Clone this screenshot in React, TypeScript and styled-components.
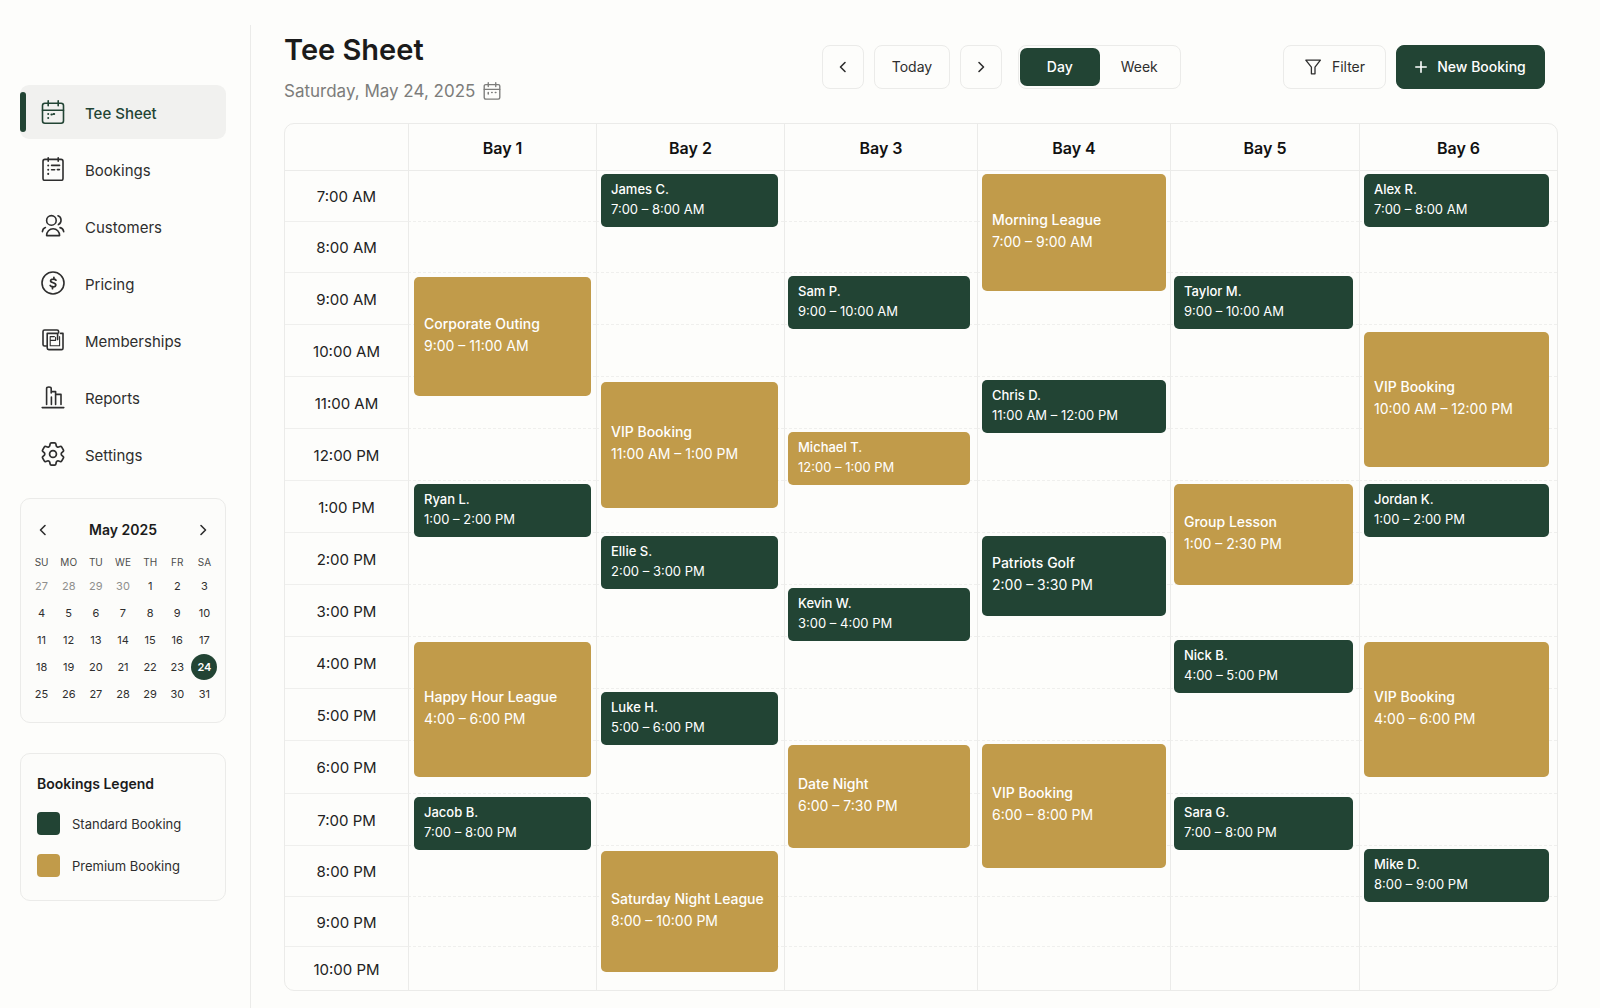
import React, { useState } from 'react';
import styled, { createGlobalStyle, css } from 'styled-components';

const color = {
  page: '#fdfdfb',
  panel: '#fcfcfa',
  line: '#ebebe9',
  lineSoft: '#efefed',
  ink: '#1b1b1b',
  text: '#2e2e2e',
  muted: '#7c7c7a',
  faint: '#8f8f8d',
  active: '#f1f1ef',
  green: '#224434',
  gold: '#c19b4a',
};

const GlobalStyle = createGlobalStyle`
  *, *::before, *::after { box-sizing: border-box; }
  body {
    margin: 0;
    background: ${color.page};
    color: ${color.text};
    font-family: Inter, "Liberation Sans", sans-serif;
    font-size: 15px;
    line-height: 20px;
  }
  button { font: inherit; color: inherit; padding: 0; cursor: pointer; }
  table { border-collapse: separate; border-spacing: 0; }
`;

const Shell = styled.div`
  display: grid;
  grid-template-columns: 251px minmax(0, 1fr);
  min-height: 100vh;
`;

const Sidebar = styled.aside`
  margin-top: 25px;
  padding: 60px 24px 24px 20px;
  border-right: 1px solid ${color.line};
`;

const NavList = styled.nav`
  display: flex;
  flex-direction: column;
  gap: 3px;
`;

const NavLink = styled.a<{ $active?: boolean }>`
  position: relative;
  display: flex;
  align-items: center;
  gap: 20px;
  height: 54px;
  padding-left: 21px;
  border-radius: 9px;
  color: ${color.text};
  text-decoration: none;
  ${(p) =>
    p.$active &&
    css`
      background: ${color.active};
      color: ${color.green};
      font-weight: 500;
      &::before {
        content: '';
        position: absolute;
        left: 0;
        top: 7px;
        bottom: 7px;
        width: 6px;
        border-radius: 3px;
        background: ${color.green};
      }
    `}
`;

const NavText = styled.span`
  padding-top: 4px;
`;

const Panel = styled.section`
  border: 1px solid ${color.line};
  border-radius: 10px;
  background: ${color.panel};
`;

const MiniCalendar = styled(Panel)`
  margin-top: 17px;
  padding: 15px 7px;
`;

const MonthBar = styled.div`
  display: flex;
  align-items: center;
  justify-content: space-between;
  height: 32px;
  margin-bottom: 6px;
  padding: 0 7px;
`;

const MonthName = styled.h2`
  margin: 0;
  font-size: 14px;
  font-weight: 600;
  color: ${color.ink};
`;

const IconButton = styled.button`
  display: grid;
  place-items: center;
  width: 16px;
  height: 16px;
  border: 0;
  background: none;
`;

const MonthTable = styled.table`
  width: 100%;
  table-layout: fixed;
  th {
    height: 20px;
    padding: 0;
    font-size: 10px;
    font-weight: 400;
    color: #4c4c4a;
  }
  td {
    height: 27px;
    padding: 0;
  }
`;

const DayButton = styled.button<{ $outside?: boolean; $selected?: boolean }>`
  display: block;
  width: 26px;
  height: 26px;
  margin: 0 auto;
  border: 0;
  border-radius: 50%;
  background: ${(p) => (p.$selected ? color.green : 'none')};
  color: ${(p) => (p.$selected ? '#fff' : p.$outside ? color.faint : color.text)};
  font-size: 11px;
  font-weight: ${(p) => (p.$selected ? 600 : 400)};
`;

const Legend = styled(Panel)`
  margin-top: 30px;
  padding: 20px 16px 23px;
`;

const LegendTitle = styled.h2`
  margin: 0 0 18px;
  font-size: 14px;
  font-weight: 600;
  color: ${color.ink};
`;

const LegendList = styled.ul`
  display: grid;
  gap: 19px;
  margin: 0;
  padding: 0;
  list-style: none;
`;

const LegendItem = styled.li`
  display: flex;
  align-items: center;
  gap: 12px;
  height: 23px;
  font-size: 13px;
`;

const Swatch = styled.span<{ $fill: string }>`
  width: 23px;
  height: 23px;
  border-radius: 4px;
  background: ${(p) => p.$fill};
`;

const Main = styled.main`
  min-width: 0;
  padding: 30px 42px 17px 33px;
`;

const Header = styled.header`
  display: flex;
  align-items: flex-start;
  justify-content: space-between;
  padding-right: 13px;
  margin-bottom: 20px;
`;

const Title = styled.h1`
  margin: 0;
  font-size: 29px;
  line-height: 40px;
  font-weight: 600;
  color: ${color.ink};
`;

const DateLine = styled.p`
  display: flex;
  align-items: center;
  gap: 8px;
  margin: 9px 0 0;
  font-size: 17px;
  line-height: 24px;
  color: ${color.muted};
`;

const Toolbar = styled.div`
  display: flex;
  gap: 102px;
  padding-top: 15px;
`;

const ToolGroup = styled.div`
  display: flex;
  gap: 10px;
`;

const Button = styled.button<{ $width: number; $primary?: boolean }>`
  display: flex;
  align-items: center;
  justify-content: center;
  gap: 10px;
  width: ${(p) => p.$width}px;
  height: 44px;
  border: 1px solid ${(p) => (p.$primary ? color.green : color.line)};
  border-radius: 8px;
  background: ${(p) => (p.$primary ? color.green : 'transparent')};
  color: ${(p) => (p.$primary ? '#fff' : color.text)};
  font-size: 14px;
  font-weight: ${(p) => (p.$primary ? 500 : 400)};
`;

const Segmented = styled.div`
  display: flex;
  width: 163px;
  height: 44px;
  margin-left: 6px;
  padding: 2px 1px;
  border: 1px solid ${color.line};
  border-radius: 8px;
`;

const Segment = styled.button<{ $on: boolean }>`
  flex: 1;
  border: 0;
  border-radius: 7px;
  background: ${(p) => (p.$on ? color.green : 'none')};
  color: ${(p) => (p.$on ? '#fff' : color.text)};
  font-size: 14px;
  font-weight: ${(p) => (p.$on ? 500 : 400)};
`;

const SheetFrame = styled.div`
  border: 1px solid ${color.line};
  border-radius: 10px;
`;

const Sheet = styled.table`
  width: 100%;
  table-layout: fixed;
`;

const SheetCol = styled.col<{ $width: number }>`
  width: ${(p) => p.$width}px;
`;

const BayHead = styled.th`
  height: 47px;
  padding: 2px 0 0;
  border-bottom: 1px solid ${color.line};
  font-size: 16px;
  font-weight: 600;
  color: #111;
  & + & { border-left: 1px solid ${color.line}; }
`;

const HourRow = styled.tr<{ $height: number }>`
  height: ${(p) => p.$height}px;
  &:last-child > * { border-bottom: 0; }
`;

const HourLabel = styled.th`
  padding: 2px 0 0;
  border-bottom: 1px solid ${color.lineSoft};
  font-weight: 400;
  color: #222;
`;

const Slot = styled.td`
  position: relative;
  padding: 0;
  border-left: 1px solid ${color.line};
  border-bottom: 1px dashed ${color.lineSoft};
`;

const Booking = styled.button<{
  $premium?: boolean;
  $roomy: boolean;
  $height: number;
  $lead: number;
  $inset: [number, number];
}>`
  position: absolute;
  z-index: 1;
  top: ${(p) => p.$lead}px;
  left: ${(p) => p.$inset[0]}px;
  right: ${(p) => p.$inset[1]}px;
  height: ${(p) => p.$height}px;
  display: flex;
  flex-direction: column;
  justify-content: center;
  padding: 0 10px 4px;
  border: 0;
  border-radius: 5px;
  background: ${(p) => (p.$premium ? color.gold : color.green)};
  color: #fff;
  font-size: ${(p) => (p.$roomy ? 14 : 13)}px;
  line-height: ${(p) => (p.$roomy ? 22 : 20)}px;
  text-align: left;
  white-space: nowrap;
`;

const BookingName = styled.span`
  font-weight: 500;
`;

type IconProps = { size?: number; children: React.ReactNode; box?: string; weight?: number };
const Icon = ({ size = 24, children, box = '0 0 24 24', weight = 1.6 }: IconProps) => (
  <svg width={size} height={size} viewBox={box} fill="none" stroke="currentColor" strokeWidth={weight}
    strokeLinecap="round" strokeLinejoin="round" aria-hidden="true">
    {children}
  </svg>
);

const TeeSheetIcon = () => (
  <Icon>
    <rect x="1.5" y="3.2" width="21" height="20" rx="2.4" />
    <path d="M1.5 10.2h21M7.2.8v5M17.2.8v5" />
    <path d="M7.2 14v.1M7.2 18v.1M10.4 14.4h.4M12.6 14h.6" strokeWidth="2" />
  </Icon>
);
const BookingsIcon = () => (
  <Icon>
    <rect x="2" y="2.4" width="20" height="21" rx="2" />
    <path d="M7.2.8v3.4M17.2.8v3.4M10.6 8.4h8M10.6 12.8h3M16.4 12.6h2" />
    <path d="M7.2 8.4v.1M7.2 12.7v.1M7.2 16.8v.1" strokeWidth="2" />
  </Icon>
);
const CustomersIcon = () => (
  <Icon>
    <circle cx="10.4" cy="6.4" r="4.8" />
    <path d="M17 1.8c4 1 4 7.400.4 8.800" />
    <path d="M5.600 21.600c0-4 2.800-6.800 6.500-6.800s6.500 2.800 6.500 6.800zM1.400 17.600c.3-2.200 1.300-3.500 3-4M19 13.600c2.100.4 3.300 1.800 3.700 4" />
  </Icon>
);
const PricingIcon = () => (
  <Icon>
    <circle cx="12" cy="12" r="11" />
    <path d="M15 9.200c-.8-1.300-5.200-1.700-5.400.6-.2 2.500 5.300 1.500 5.200 4.200-.1 2.400-4.500 2.200-5.600.5M12.900 6.300v2M11.500 15.700v2" strokeWidth="1.700" />
  </Icon>
);
const MembershipsIcon = () => (
  <Icon>
    <path d="M5.400 18H3.600a1.600 1.600 0 0 1-1.600-1.600V3.600A1.600 1.600 0 0 1 3.600 2H16a1.600 1.600 0 0 1 1.600 1.600V5" />
    <path d="M19.600 5.400H22v14.800a1.400 1.400 0 0 1-1.400 1.400H7.800a1.600 1.600 0 0 1-1.600-1.600V5.400h10.400v6.200" />
    <path d="M9.200 17.800V8.600h4.200M9.400 12.400h5.200v-3M18.600 8.600v9.200H9.400" strokeWidth="1.100" />
  </Icon>
);
const ReportsIcon = () => (
  <Icon>
    <path d="M1.200 22.600h21.600" />
    <path d="M5.600 19.400V3.400c0-1.800 4.600-1.800 4.600 0V8M10.200 6.600h4.400V19.400M14.600 9.400h5.400V19.400M10.400 12v7.400" strokeWidth="1.600" />
  </Icon>
);
const SettingsIcon = () => (
  <Icon box="2.200 2.200 19.600 19.600" weight={1.400}>
    <path d="M9.594 3.940c.09-.542.56-.94 1.110-.94h2.593c.55 0 1.020.398 1.110.94l.213 1.281c.063.374.313.686.645.870.074.040.147.083.220.127.325.196.720.257 1.075.124l1.217-.456a1.125 1.125 0 0 1 1.370.490l1.296 2.247a1.125 1.125 0 0 1-.260 1.431l-1.003.827c-.293.241-.438.613-.430.992a7.723 7.723 0 0 1 0 .255c-.008.378.137.750.430.991l1.004.827c.424.350.534.955.260 1.430l-1.298 2.247a1.125 1.125 0 0 1-1.369.491l-1.217-.456c-.355-.133-.750-.072-1.076.124a6.470 6.470 0 0 1-.220.128c-.331.183-.581.495-.644.869l-.213 1.281c-.090.543-.560.940-1.110.940h-2.594c-.550 0-1.019-.398-1.110-.940l-.213-1.281c-.062-.374-.312-.686-.644-.870a6.520 6.520 0 0 1-.220-.127c-.325-.196-.720-.257-1.076-.124l-1.217.456a1.125 1.125 0 0 1-1.369-.490l-1.297-2.247a1.125 1.125 0 0 1 .260-1.431l1.004-.827c.292-.240.437-.613.430-.991a6.932 6.932 0 0 1 0-.255c.007-.380-.138-.751-.430-.992l-1.004-.827a1.125 1.125 0 0 1-.260-1.430l1.297-2.247a1.125 1.125 0 0 1 1.370-.491l1.216.456c.356.133.751.072 1.076-.124.072-.044.146-.086.220-.128.332-.183.582-.495.644-.869l.214-1.280Z" />
    <circle cx="12" cy="12" r="2.800" />
  </Icon>
);
const SmallCalendarIcon = () => (
  <Icon size={18}>
    <rect x="1.600" y="3.400" width="20.800" height="19.400" rx="2" strokeWidth="1.800" />
    <path d="M1.600 9.800h20.800M7 1v5M17 1v5" strokeWidth="1.800" />
    <path d="M7 14v2M11.600 14h.6M16.400 14h.8" strokeWidth="2" />
  </Icon>
);
const ChevronLeft = () => (
  <Icon size={16} box="0 0 16 16"><path d="M10 3.500 5.500 8l4.500 4.500" /></Icon>
);
const ChevronRight = () => (
  <Icon size={16} box="0 0 16 16"><path d="M6 3.500 10.500 8 6 12.500" /></Icon>
);
const FilterIcon = () => (
  <Icon size={18} box="0 0 18 18"><path d="M1.800 2.200h14.600L11 9.200v6.600H7.400V9.200z" strokeWidth="1.300" /></Icon>
);
const PlusIcon = () => (
  <Icon size={12} box="0 0 12 12"><path d="M6 .8v10.400M.8 6h10.400" /></Icon>
);

const navItems = [
  { label: 'Tee Sheet', icon: <TeeSheetIcon /> },
  { label: 'Bookings', icon: <BookingsIcon /> },
  { label: 'Customers', icon: <CustomersIcon /> },
  { label: 'Pricing', icon: <PricingIcon /> },
  { label: 'Memberships', icon: <MembershipsIcon /> },
  { label: 'Reports', icon: <ReportsIcon /> },
  { label: 'Settings', icon: <SettingsIcon /> },
];

const weekdays = ['SU', 'MO', 'TU', 'WE', 'TH', 'FR', 'SA'];
const weeks = Array.from({ length: 5 }, (_, w) =>
  Array.from({ length: 7 }, (_, d) => {
    const n = w * 7 + d - 3;
    return n < 1 ? { day: 30 + n, outside: true } : { day: n, outside: false };
  }),
);

type BayInfo = { name: string; width: number; inset: [number, number] };
const bays: BayInfo[] = [
  { name: 'Bay 1', width: 188, inset: [5, 5] },
  { name: 'Bay 2', width: 188, inset: [4, 6] },
  { name: 'Bay 3', width: 193, inset: [3, 7] },
  { name: 'Bay 4', width: 193, inset: [4, 4] },
  { name: 'Bay 5', width: 189, inset: [3, 6] },
  { name: 'Bay 6', width: 198, inset: [4, 8] },
];

const hours: [string, number][] = [
  ['7:00 AM', 51], ['8:00 AM', 51], ['9:00 AM', 52], ['10:00 AM', 52],
  ['11:00 AM', 52], ['12:00 PM', 52], ['1:00 PM', 52], ['2:00 PM', 52],
  ['3:00 PM', 52], ['4:00 PM', 52], ['5:00 PM', 52], ['6:00 PM', 53],
  ['7:00 PM', 52], ['8:00 PM', 51], ['9:00 PM', 50], ['10:00 PM', 43],
];

type BookingInfo = {
  bay: number;
  start: string;
  name: string;
  time: string;
  height?: number;
  lead?: number;
  premium?: boolean;
};
const bookings: BookingInfo[] = [
  { bay: 1, start: '9:00 AM', name: 'Corporate Outing', time: '9:00 – 11:00 AM', height: 119, lead: 4, premium: true },
  { bay: 1, start: '1:00 PM', name: 'Ryan L.', time: '1:00 – 2:00 PM' },
  { bay: 1, start: '4:00 PM', name: 'Happy Hour League', time: '4:00 – 6:00 PM', height: 135, lead: 5, premium: true },
  { bay: 1, start: '7:00 PM', name: 'Jacob B.', time: '7:00 – 8:00 PM' },
  { bay: 2, start: '7:00 AM', name: 'James C.', time: '7:00 – 8:00 AM' },
  { bay: 2, start: '11:00 AM', name: 'VIP Booking', time: '11:00 AM – 1:00 PM', height: 126, lead: 5, premium: true },
  { bay: 2, start: '2:00 PM', name: 'Ellie S.', time: '2:00 – 3:00 PM' },
  { bay: 2, start: '5:00 PM', name: 'Luke H.', time: '5:00 – 6:00 PM' },
  { bay: 2, start: '8:00 PM', name: 'Saturday Night League', time: '8:00 – 10:00 PM', height: 121, lead: 5, premium: true },
  { bay: 3, start: '9:00 AM', name: 'Sam P.', time: '9:00 – 10:00 AM' },
  { bay: 3, start: '12:00 PM', name: 'Michael T.', time: '12:00 – 1:00 PM', premium: true },
  { bay: 3, start: '3:00 PM', name: 'Kevin W.', time: '3:00 – 4:00 PM' },
  { bay: 3, start: '6:00 PM', name: 'Date Night', time: '6:00 – 7:30 PM', height: 103, lead: 4, premium: true },
  { bay: 4, start: '7:00 AM', name: 'Morning League', time: '7:00 – 9:00 AM', height: 117, premium: true },
  { bay: 4, start: '11:00 AM', name: 'Chris D.', time: '11:00 AM – 12:00 PM' },
  { bay: 4, start: '2:00 PM', name: 'Patriots Golf', time: '2:00 – 3:30 PM', height: 80 },
  { bay: 4, start: '6:00 PM', name: 'VIP Booking', time: '6:00 – 8:00 PM', height: 124, premium: true },
  { bay: 5, start: '9:00 AM', name: 'Taylor M.', time: '9:00 – 10:00 AM' },
  { bay: 5, start: '1:00 PM', name: 'Group Lesson', time: '1:00 – 2:30 PM', height: 101, premium: true },
  { bay: 5, start: '4:00 PM', name: 'Nick B.', time: '4:00 – 5:00 PM' },
  { bay: 5, start: '7:00 PM', name: 'Sara G.', time: '7:00 – 8:00 PM' },
  { bay: 6, start: '7:00 AM', name: 'Alex R.', time: '7:00 – 8:00 AM' },
  { bay: 6, start: '10:00 AM', name: 'VIP Booking', time: '10:00 AM – 12:00 PM', height: 135, lead: 7, premium: true },
  { bay: 6, start: '1:00 PM', name: 'Jordan K.', time: '1:00 – 2:00 PM' },
  { bay: 6, start: '4:00 PM', name: 'VIP Booking', time: '4:00 – 6:00 PM', height: 135, lead: 5, premium: true },
  { bay: 6, start: '8:00 PM', name: 'Mike D.', time: '8:00 – 9:00 PM' },
];

export default function App() {
  const [view, setView] = useState('Day');
  const [selected, setSelected] = useState(24);

  return (
    <>
      <GlobalStyle />
      <Shell>
        <Sidebar>
          <NavList aria-label="Main">
            {navItems.map((item, i) => (
              <NavLink key={item.label} href="#" $active={i === 0} aria-current={i === 0 ? 'page' : undefined}>
                {item.icon}
                <NavText>{item.label}</NavText>
              </NavLink>
            ))}
          </NavList>

          <MiniCalendar>
            <MonthBar>
              <IconButton aria-label="Previous month"><ChevronLeft /></IconButton>
              <MonthName>May 2025</MonthName>
              <IconButton aria-label="Next month"><ChevronRight /></IconButton>
            </MonthBar>
            <MonthTable>
              <thead>
                <tr>{weekdays.map((d) => <th key={d} scope="col">{d}</th>)}</tr>
              </thead>
              <tbody>
                {weeks.map((week, w) => (
                  <tr key={w}>
                    {week.map(({ day, outside }) => (
                      <td key={day}>
                        <DayButton
                          $outside={outside}
                          $selected={!outside && day === selected}
                          onClick={() => !outside && setSelected(day)}
                        >
                          {day}
                        </DayButton>
                      </td>
                    ))}
                  </tr>
                ))}
              </tbody>
            </MonthTable>
          </MiniCalendar>

          <Legend>
            <LegendTitle>Bookings Legend</LegendTitle>
            <LegendList>
              <LegendItem><Swatch $fill={color.green} />Standard Booking</LegendItem>
              <LegendItem><Swatch $fill={color.gold} />Premium Booking</LegendItem>
            </LegendList>
          </Legend>
        </Sidebar>

        <Main>
          <Header>
            <div>
              <Title>Tee Sheet</Title>
              <DateLine>Saturday, May 24, 2025 <SmallCalendarIcon /></DateLine>
            </div>
            <Toolbar>
              <ToolGroup>
                <Button $width={42} aria-label="Previous day"><ChevronLeft /></Button>
                <Button $width={76}>Today</Button>
                <Button $width={42} aria-label="Next day"><ChevronRight /></Button>
                <Segmented>
                  {['Day', 'Week'].map((v) => (
                    <Segment key={v} $on={view === v} aria-pressed={view === v} onClick={() => setView(v)}>
                      {v}
                    </Segment>
                  ))}
                </Segmented>
              </ToolGroup>
              <ToolGroup>
                <Button $width={103}><FilterIcon />Filter</Button>
                <Button $width={149} $primary><PlusIcon />New Booking</Button>
              </ToolGroup>
            </Toolbar>
          </Header>

          <SheetFrame>
            <Sheet>
              <colgroup>
                <SheetCol $width={123} />
                {bays.map((b) => <SheetCol key={b.name} $width={b.width} />)}
              </colgroup>
              <thead>
                <tr>
                  <BayHead aria-label="Time" />
                  {bays.map((b) => <BayHead key={b.name} scope="col">{b.name}</BayHead>)}
                </tr>
              </thead>
              <tbody>
                {hours.map(([label, height]) => (
                  <HourRow key={label} $height={height}>
                    <HourLabel scope="row">{label}</HourLabel>
                    {bays.map((bay, i) => (
                      <Slot key={bay.name}>
                        {bookings
                          .filter((b) => b.bay === i + 1 && b.start === label)
                          .map((b) => (
                            <Booking
                              key={b.name}
                              $premium={b.premium}
                              $roomy={b.height !== undefined}
                              $height={b.height ?? 53}
                              $lead={b.lead ?? 3}
                              $inset={bay.inset}
                            >
                              <BookingName>{b.name}</BookingName>
                              <span>{b.time}</span>
                            </Booking>
                          ))}
                      </Slot>
                    ))}
                  </HourRow>
                ))}
              </tbody>
            </Sheet>
          </SheetFrame>
        </Main>
      </Shell>
    </>
  );
}
